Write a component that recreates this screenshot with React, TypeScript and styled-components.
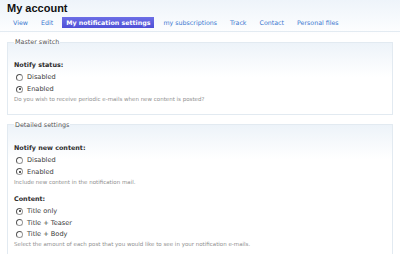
import React from "react";
import styled, { createGlobalStyle } from "styled-components";

const GlobalStyle = createGlobalStyle`
  html, body {
    margin: 0;
    padding: 0;
    background: #ffffff;
  }
  body {
    font-family: "DejaVu Sans", Verdana, sans-serif;
    color: #494949;
  }
`;

const Page = styled.div`
  width: 400px;
  height: 254px;
  overflow: hidden;
  background: linear-gradient(to bottom, #eef4fa 0px, #ffffff 36px);
`;

const Title = styled.h1`
  margin: 0;
  padding: 1px 7px 0;
  height: 15px;
  font-family: "Liberation Sans", Arial, sans-serif;
  font-size: 11px;
  line-height: 15px;
  font-weight: 700;
  color: #111111;
`;

const Tabs = styled.ul`
  display: flex;
  align-items: center;
  margin: 0;
  padding: 0 0 3px 9px;
  height: 12px;
  list-style: none;
  border-bottom: 1px solid #e3ebf2;
`;

const Tab = styled.li<{ $active?: boolean }>`
  display: flex;
  align-items: center;
  height: 11px;
  padding: 0 4px;
  margin-right: 5px;
  font-size: 6.3px;
  font-weight: ${({ $active }) => ($active ? 700 : 400)};
  color: ${({ $active }) => ($active ? "#ffffff" : "#3b78d0")};
  background: ${({ $active }) =>
    $active ? "linear-gradient(to bottom, #6d6fe6, #4f50d6)" : "transparent"};
  white-space: nowrap;
`;

const Content = styled.div`
  padding: 6px 7px 0;
  display: flex;
  flex-direction: column;
  gap: 6px;
`;

const Fieldset = styled.fieldset`
  margin: 0;
  padding: 8px 6px 11px;
  border: 1px solid #e2eaf1;
  background: linear-gradient(to bottom, #edf3f9 0px, #ffffff 34px);
`;

const Legend = styled.legend`
  padding: 0 1px;
  margin-left: 0;
  font-size: 6.4px;
  color: #555555;
`;

const FormItem = styled.div`
  display: flex;
  flex-direction: column;
  margin-top: 6px;

  & + & {
    margin-top: 8px;
  }
`;

const Label = styled.div`
  font-size: 6.4px;
  line-height: 10px;
  font-weight: 700;
  color: #2b2b2b;
  margin-bottom: 1.5px;
`;

const Option = styled.label`
  display: flex;
  align-items: center;
  gap: 4px;
  height: 11.7px;
  padding-left: 2px;
  font-size: 6.6px;
  color: #3a3a3a;
`;

const Radio = styled.span<{ $checked?: boolean }>`
  position: relative;
  width: 5px;
  height: 5px;
  border-radius: 50%;
  border: 1px solid #9a9a9a;
  border-top-color: #555555;
  border-left-color: #555555;
  background: #ffffff;

  &::after {
    content: "";
    position: absolute;
    left: 1.5px;
    top: 1.5px;
    width: 2px;
    height: 2px;
    border-radius: 50%;
    background: ${({ $checked }) => ($checked ? "#222222" : "transparent")};
  }
`;

const Description = styled.div`
  font-size: 5.5px;
  line-height: 8px;
  color: #8f8f8f;
`;

function RadioGroup({
  label,
  options,
  selected,
  description,
}: {
  label: string;
  options: string[];
  selected: string;
  description: string;
}) {
  return (
    <FormItem>
      <Label>{label}</Label>
      {options.map((o) => (
        <Option key={o}>
          <Radio $checked={o === selected} />
          {o}
        </Option>
      ))}
      <Description>{description}</Description>
    </FormItem>
  );
}

export default function App() {
  return (
    <>
      <GlobalStyle />
      <Page>
        <Title>My account</Title>
        <Tabs>
          <Tab>View</Tab>
          <Tab>Edit</Tab>
          <Tab $active>My notification settings</Tab>
          <Tab>my subscriptions</Tab>
          <Tab>Track</Tab>
          <Tab>Contact</Tab>
          <Tab>Personal files</Tab>
        </Tabs>
        <Content>
          <Fieldset>
            <Legend>Master switch</Legend>
            <RadioGroup
              label="Notify status:"
              options={["Disabled", "Enabled"]}
              selected="Enabled"
              description="Do you wish to receive periodic e-mails when new content is posted?"
            />
          </Fieldset>
          <Fieldset>
            <Legend>Detailed settings</Legend>
            <RadioGroup
              label="Notify new content:"
              options={["Disabled", "Enabled"]}
              selected="Enabled"
              description="Include new content in the notification mail."
            />
            <RadioGroup
              label="Content:"
              options={["Title only", "Title + Teaser", "Title + Body"]}
              selected="Title only"
              description="Select the amount of each post that you would like to see in your notification e-mails."
            />
          </Fieldset>
        </Content>
      </Page>
    </>
  );
}
